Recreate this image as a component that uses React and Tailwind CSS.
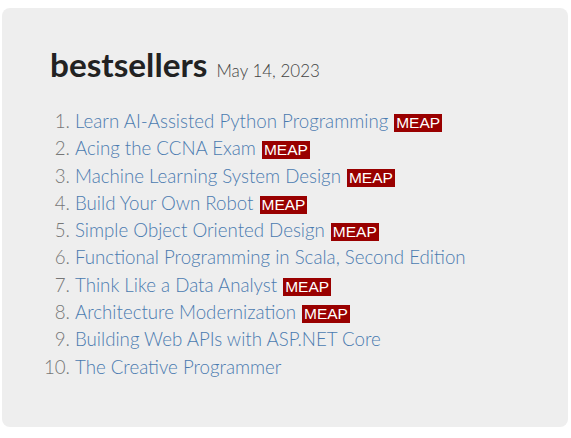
const books = [
  { title: 'Learn AI-Assisted Python Programming', meap: true },
  { title: 'Acing the CCNA Exam', meap: true },
  { title: 'Machine Learning System Design', meap: true },
  { title: 'Build Your Own Robot', meap: true },
  { title: 'Simple Object Oriented Design', meap: true },
  { title: 'Functional Programming in Scala, Second Edition', meap: false },
  { title: 'Think Like a Data Analyst', meap: true },
  { title: 'Architecture Modernization', meap: true },
  { title: 'Building Web APIs with ASP.NET Core', meap: false },
  { title: 'The Creative Programmer', meap: false },
];

export default function App() {
  return (
    <div className="bg-white p-[2px] pt-[8px] font-['Lato',sans-serif]">
      <div className="w-[566px] h-[419px] bg-[#eeeeee] rounded-lg px-[48px] pt-[31px]">
        {/* Heading */}
        <h2 className="flex items-baseline gap-[9px] text-[#222]">
          <span className="text-[33.3px] font-bold leading-[50px]">bestsellers</span>
          <span className="text-[17px] font-light text-[#444]">May 14, 2023</span>
        </h2>

        <ol className="list-decimal pl-[25px] mt-[19px] text-[18.7px] font-light leading-[27.3px] marker:text-[#777]">
          {books.map((b) => (
            <li key={b.title}>
              <a href="#" className="text-[#4b7bb0]">{b.title}</a>
              {b.meap && (
                <span className="ml-[6px] bg-[#990000] text-white font-['Liberation_Sans',sans-serif] font-normal text-[15.5px] leading-[18px] px-[2px] inline-block">
                  MEAP
                </span>
              )}
            </li>
          ))}
        </ol>
      </div>
    </div>
  );
}
